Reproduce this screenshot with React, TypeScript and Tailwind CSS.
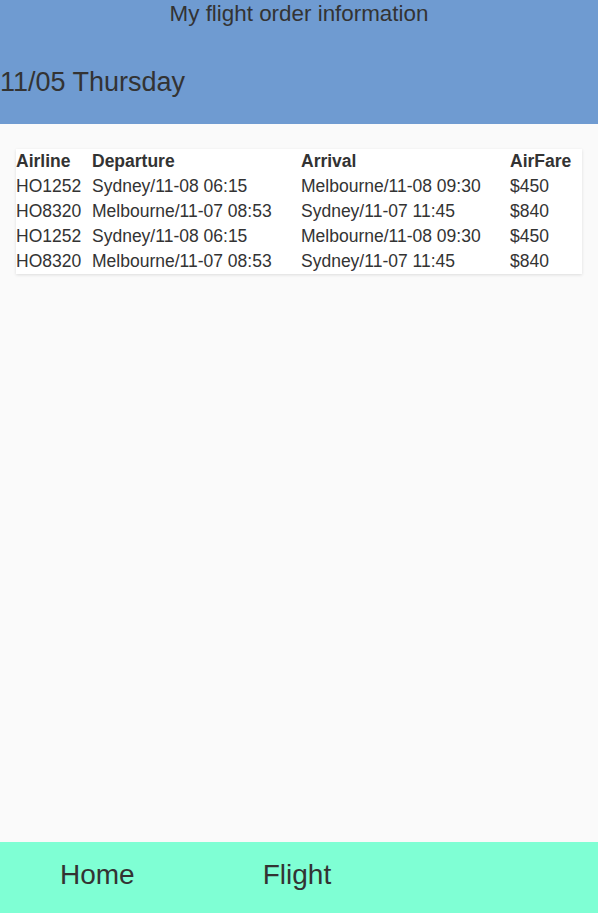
import React from 'react';

const flights = [
  { airline: 'HO1252', dep: 'Sydney/11-08 06:15', arr: 'Melbourne/11-08 09:30', fare: '$450' },
  { airline: 'HO8320', dep: 'Melbourne/11-07 08:53', arr: 'Sydney/11-07 11:45', fare: '$840' },
  { airline: 'HO1252', dep: 'Sydney/11-08 06:15', arr: 'Melbourne/11-08 09:30', fare: '$450' },
  { airline: 'HO8320', dep: 'Melbourne/11-07 08:53', arr: 'Sydney/11-07 11:45', fare: '$840' },
];

export default function App() {
  return (
    <div className="w-[598px] h-[913px] flex flex-col bg-[#fafafa] text-[#333] font-['Liberation_Sans',Arial,sans-serif]">
      <header className="h-[124px] bg-[#6f9bd1] flex flex-col">
        <h1 className="text-[22.4px] leading-[28px] text-center">My flight order information</h1>
        <div className="mt-[39px] text-[27px] leading-[30px]">11/05 Thursday</div>
      </header>

      <main className="flex-1 px-[16px] pt-[25px]">
        <div className="bg-white shadow-[0_1px_3px_rgba(0,0,0,0.12)] text-[17.5px] leading-[25px]">
          <div className="grid grid-cols-[76px_209px_209px_1fr] font-bold">
            <span>Airline</span>
            <span>Departure</span>
            <span>Arrival</span>
            <span>AirFare</span>
          </div>
          {flights.map((f, i) => (
            <div key={i} className="grid grid-cols-[76px_209px_209px_1fr]">
              <span>{f.airline}</span>
              <span>{f.dep}</span>
              <span>{f.arr}</span>
              <span>{f.fare}</span>
            </div>
          ))}
        </div>
      </main>

      <nav className="h-[71px] bg-[#7fffd4] flex items-center pb-[6px] text-[28px]">
        <span className="ml-[60px]">Home</span>
        <span className="ml-[128px]">Flight</span>
      </nav>
    </div>
  );
}
